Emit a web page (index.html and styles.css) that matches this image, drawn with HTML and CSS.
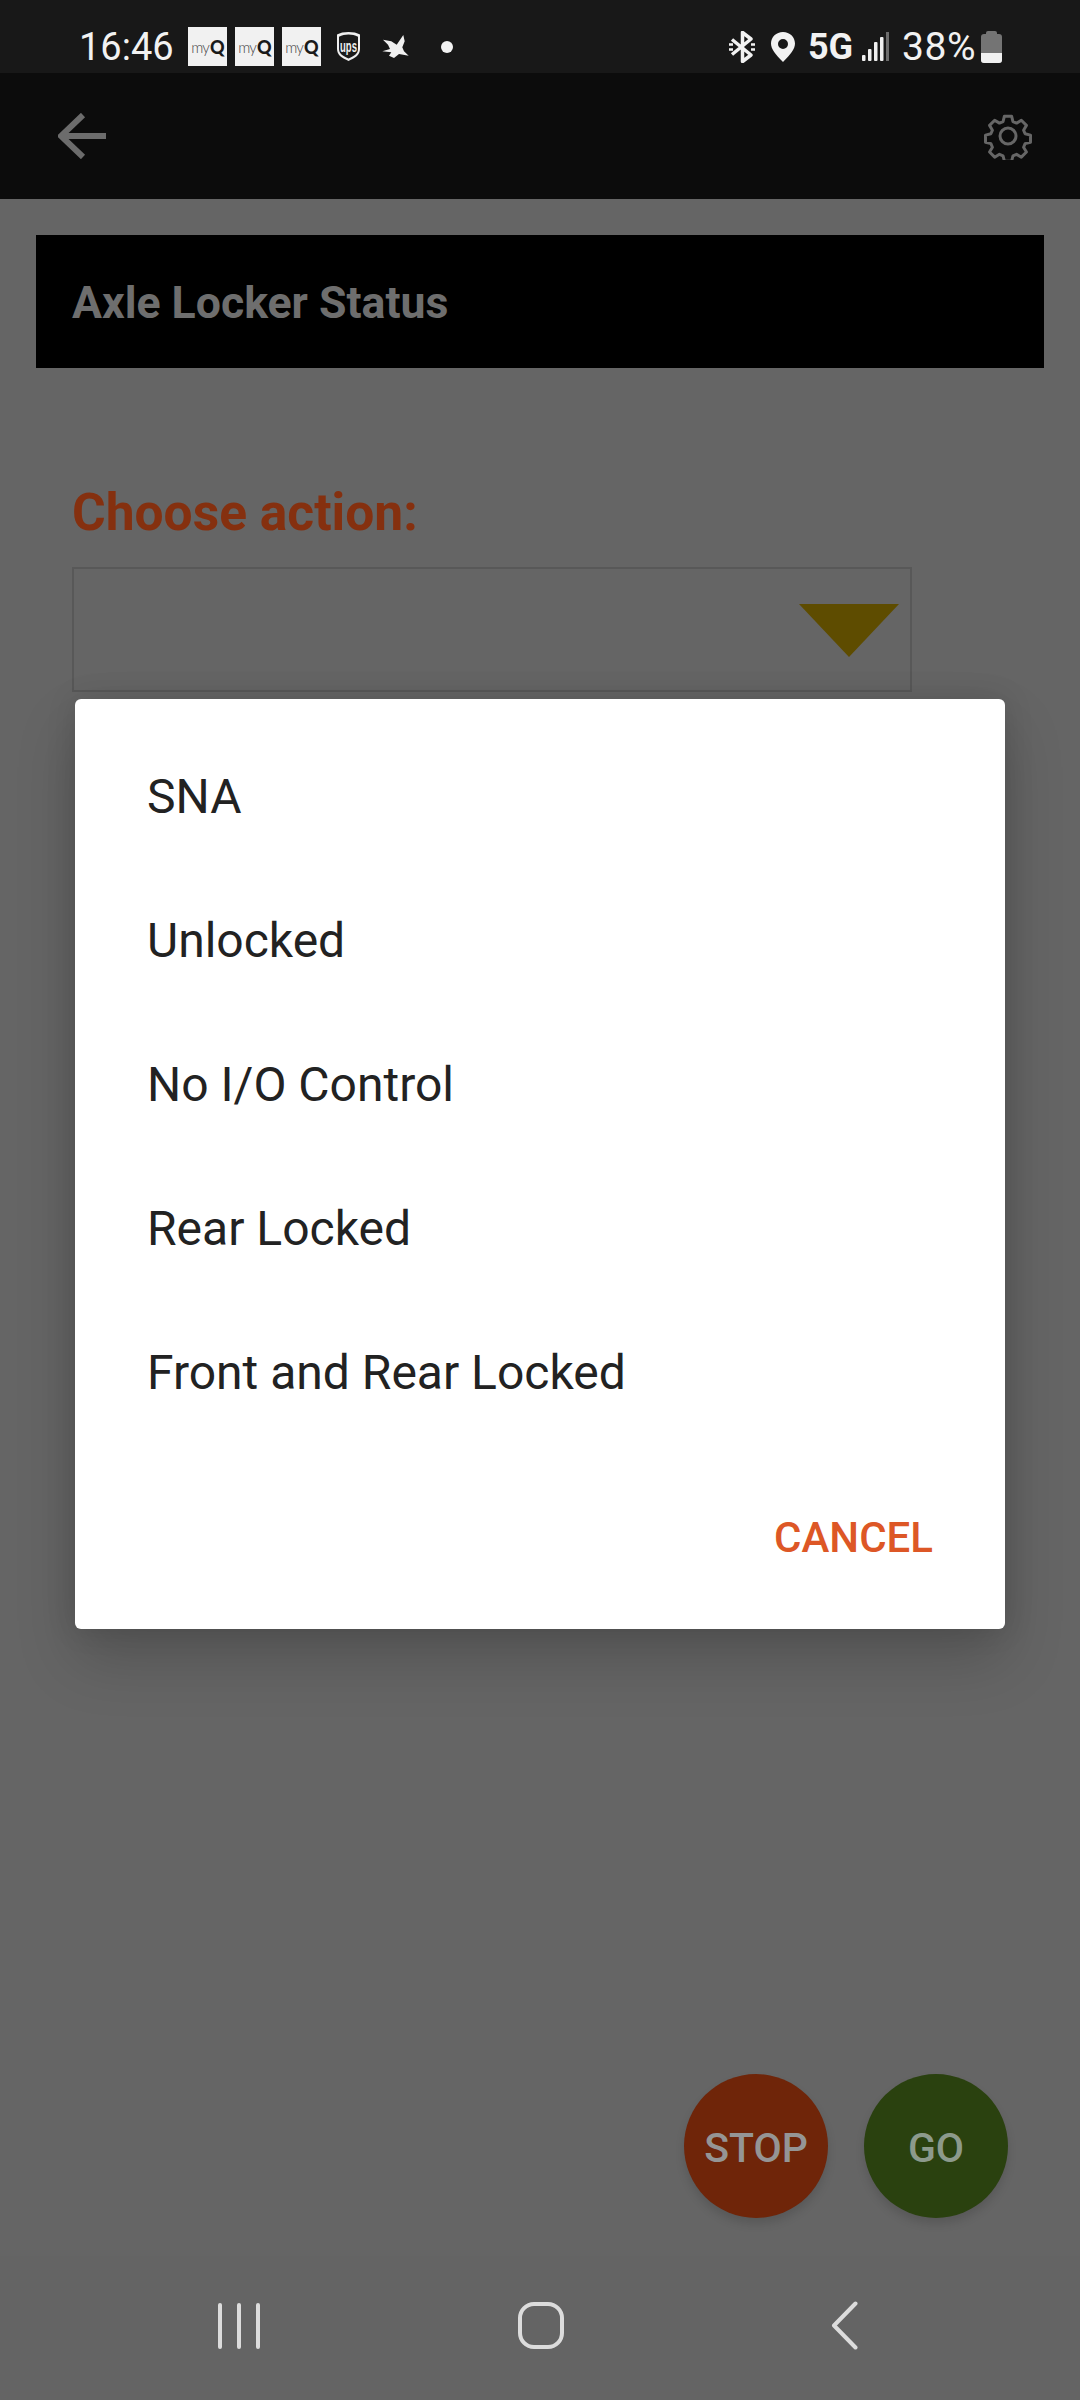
FILE: index.html
```html
<!DOCTYPE html>
<html lang="en">

<head>
    <meta charset="UTF-8">
    <meta name="viewport" content="width=device-width, initial-scale=1.0">
    <title>Axle Locker Status</title>
    <link rel="stylesheet" href="styles.css">
</head>

<body>
    <div class="status-bar">
        <div class="status-left">
            <span class="clock">16:46</span>
            <div class="notif-icons">
                <span class="myq">my<b>Q</b></span>
                <span class="myq">my<b>Q</b></span>
                <span class="myq">my<b>Q</b></span>
                <svg class="ups" viewBox="0 0 25 31">
                    <path d="M12.5 1C8 1 4 1.800 1 3.500V18c0 6 5 9 11.500 12C19 27 24 24 24 18V3.500C21 1.800 17 1 12.500 1Z" fill="#efefef"/>
                    <path d="M12.500 3.500C9 3.500 6 4.200 3 5.800V18c0 4.500 3.500 6.800 9.500 9.600 6-2.800 9.500-5.100 9.500-9.600V5.800C19 4.200 16 3.500 12.500 3.500Z" fill="#1a1a1a"/>
                    <text class="ups-text" transform="translate(12.500 20.500) scale(.95 1.600)" text-anchor="middle">ups</text>
                </svg>
                <svg class="bird" viewBox="0 0 27 25">
                    <path d="M1 5.700L9.300 7.300 14.700 10.700 21.300 1 22.700 7.300 20.300 13.300 22 17.300 26.700 21.700 17 20 12 24 7 21.700 9.300 18.300 .3 17.300 8 15 6 10.700Z" fill="#f0f0f0"/>
                </svg>
                <span class="notif-dot"></span>
            </div>
        </div>
        <div class="status-right">
            <svg class="bt" viewBox="0 0 26 32">
                <path d="M3 8.500l19 15.500-8.500 6.500V1.500L22 8 3 23.500" fill="none" stroke="#f2f2f2" stroke-width="3.500" stroke-linejoin="round"/>
                <path d="M0 13.500h4M22 13.500h4M0 18.500h4M22 18.500h4" stroke="#f2f2f2" stroke-width="2.500"/>
            </svg>
            <svg class="pin" viewBox="0 0 24 30">
                <path fill-rule="evenodd" d="M12 0c6.800 0 12 5 12 11.500 0 5.500-4.500 11-12 18.500C4.500 22.500 0 17 0 11.500 0 5 5.200 0 12 0Zm0 7a5 5 0 1 0 0 10 5 5 0 0 0 0-10Z" fill="#f2f2f2"/>
            </svg>
            <span class="net">5G</span>
            <svg class="signal" viewBox="0 0 27 29">
                <rect x="0" y="23" width="3.500" height="6" rx="1" fill="#f0f0f0"/>
                <rect x="6" y="17" width="3.500" height="12" rx="1" fill="#f0f0f0"/>
                <rect x="12" y="10" width="3.500" height="19" rx="1" fill="#f0f0f0"/>
                <rect x="18" y="5" width="3.500" height="24" rx="1" fill="#f0f0f0"/>
                <rect x="24" y="0" width="3" height="29" fill="#6c6c6c"/>
            </svg>
            <span class="batt-text">38%</span>
            <span class="battery"><span class="battery-level"></span></span>
        </div>
    </div>

    <div class="app-screen">
        <div class="app-bar">
            <svg class="back-icon" viewBox="0 0 48 46">
                <path d="M48 23H4M25 2L3 23l22 21" fill="none" stroke="#6c6c6c" stroke-width="6"/>
            </svg>
            <svg class="gear-icon" viewBox="0 0 48 48">
                <circle cx="24" cy="24" r="8" fill="none" stroke="#666" stroke-width="3"/>
                <path d="M20 2h8l1.500 6 4 1.700 5.300-3.200 5.700 5.700-3.200 5.300 1.700 4 6 1.500v8l-6 1.500-1.700 4 3.200 5.300-5.700 5.700-5.300-3.200-4 1.700-1.500 6h-8l-1.500-6-4-1.700-5.300 3.200-5.700-5.700 3.200-5.300-1.700-4-6-1.500v-8l6-1.500 1.700-4-3.200-5.300 5.700-5.700 5.300 3.200 4-1.700Z" fill="none" stroke="#666" stroke-width="3.300" stroke-linejoin="round" transform="translate(2.400 2.400) scale(.9)"/>
            </svg>
        </div>

        <div class="content">
            <div class="title-box">Axle Locker Status</div>
            <div class="action-label">Choose action:</div>
            <div class="select-box"><span class="select-arrow"></span></div>
        </div>

        <div class="fab-row">
            <div class="fab fab-stop">STOP</div>
            <div class="fab fab-go">GO</div>
        </div>

        <!-- picker, over the dimmed page -->
        <div class="scrim">
            <div class="dialog">
                <div class="dialog-item">SNA</div>
                <div class="dialog-item">Unlocked</div>
                <div class="dialog-item">No I/O Control</div>
                <div class="dialog-item">Rear Locked</div>
                <div class="dialog-item">Front and Rear Locked</div>
                <div class="dialog-actions"><span class="cancel">CANCEL</span></div>
            </div>
        </div>
    </div>

    <div class="nav-bar">
        <div class="nav-recents"><span></span><span></span><span></span></div>
        <div class="nav-home"></div>
        <svg class="nav-back" viewBox="0 0 27 49">
            <path d="M24.500 2.500L3 24.500l21.500 22" fill="none" stroke="#dcdcdc" stroke-width="4" stroke-linecap="round" stroke-linejoin="round"/>
        </svg>
    </div>
</body>

</html>
```

FILE: styles.css
```css
* {
    box-sizing: border-box;
}

body {
    width: 1080px;
    height: 2400px;
    margin: 0;
    overflow: hidden;
    display: flex;
    flex-direction: column;
    font-family: Roboto, "Noto Sans", sans-serif;
    background: #646464;
}

/* status bar */
.status-bar {
    height: 73px;
    flex: none;
    background: #181818;
    display: flex;
    justify-content: space-between;
    color: #f2f2f2;
    padding: 27px 78px 0 79px;
}

.status-left, .status-right, .notif-icons {
    display: flex;
    align-items: center;
    height: 39px;
}

.clock {
    font-size: 38px;
    width: 109px;
}

.notif-icons {
    gap: 8px;
}

.myq {
    width: 39px;
    height: 39px;
    background: #f1f1f1;
    color: #444;
    font-size: 15px;
    font-weight: 300;
    font-family: Lato, sans-serif;
    display: flex;
    align-items: center;
    justify-content: center;
    letter-spacing: -.8px;
}

.myq b {
    font-size: 18px;
    font-weight: 900;
    color: #1a1a1a;
    margin-left: 1px;
}

.ups {
    width: 25px;
    height: 31px;
    margin-left: 7px;
}

.ups-text {
    font-family: "Liberation Sans", sans-serif;
    font-size: 10px;
    font-weight: 700;
    fill: #efefef;
}

.bird {
    width: 27px;
    height: 25px;
    margin-left: 13px;
}

.notif-dot {
    width: 12px;
    height: 12px;
    border-radius: 50%;
    background: #f2f2f2;
    margin-left: 24px;
}

.bt {
    width: 26px;
    height: 32px;
}

.pin {
    width: 24px;
    height: 30px;
    margin-left: 16px;
}

.net {
    font-size: 36px;
    font-weight: 700;
    margin-left: 13px;
}

.signal {
    width: 27px;
    height: 29px;
    margin-left: 9px;
}

.batt-text {
    font-size: 39px;
    letter-spacing: .5px;
    margin-left: 13px;
}

.battery {
    width: 21px;
    height: 29px;
    margin: 3px 0 0 5px;
    position: relative;
    background: #747474;
    border-radius: 3px;
    display: flex;
    align-items: flex-end;
}

.battery::before {
    content: "";
    position: absolute;
    top: -3px;
    left: 5px;
    width: 11px;
    height: 4px;
    border-radius: 2px 2px 0 0;
    background: #747474;
}

.battery-level {
    width: 100%;
    height: 10px;
    background: #f0f0f0;
    border-radius: 0 0 3px 3px;
}

/* app underneath the dialog, colours already dimmed */
.app-screen {
    flex: 1;
    position: relative;
    background: #656565;
}

.app-bar {
    height: 126px;
    background: #0c0c0c;
    display: flex;
    justify-content: space-between;
    align-items: center;
    padding: 0 48px 0 58px;
    margin-bottom: 36px;
}

.back-icon {
    width: 48px;
    height: 46px;
}

.gear-icon {
    width: 48px;
    height: 48px;
}

.content {
    padding: 0 36px;
}

.title-box {
    height: 133px;
    background: #000;
    color: #6e6e6e;
    font-size: 44.600px;
    font-weight: 700;
    display: flex;
    align-items: center;
    padding: 2px 0 0 36px;
}

.action-label {
    color: #85300f;
    font-size: 51.500px;
    font-weight: 700;
    line-height: 56px;
    margin: 117px 0 0 36px;
}

.select-box {
    width: 840px;
    height: 125px;
    margin: 26px 0 0 36px;
    border: 2px solid #585858;
    position: relative;
}

.select-arrow {
    position: absolute;
    top: 35px;
    right: 11px;
    width: 0;
    height: 0;
    border-style: solid;
    border-width: 53px 50px 0;
    border-color: #5e4c00 transparent transparent;
}

.fab-row {
    position: absolute;
    right: 72px;
    top: 2001px;
    display: flex;
    gap: 36px;
}

.fab {
    width: 144px;
    height: 144px;
    border-radius: 50%;
    font-size: 41px;
    font-weight: 500;
    display: flex;
    align-items: center;
    justify-content: center;
    padding-top: 3px;
    box-shadow: 0 6px 10px rgba(0, 0, 0, .13);
}

.fab-stop {
    background: #6f2509;
    color: #959595;
}

.fab-go {
    background: #2a410f;
    color: #8c9a8c;
}

/* dialog */
.scrim {
    position: absolute;
    inset: 0;
    display: flex;
    align-items: flex-start;
    justify-content: center;
    padding-top: 626px;
}

.dialog {
    width: 930px;
    height: 930px;
    background: #fff;
    border-radius: 6px;
    padding-top: 25px;
    box-shadow: 0 30px 60px rgba(0, 0, 0, .18), 0 0 30px rgba(0, 0, 0, .12);
}

.dialog-item {
    height: 144px;
    display: flex;
    align-items: center;
    padding-left: 72px;
    font-size: 48px;
    color: #222;
}

.dialog-actions {
    display: flex;
    justify-content: flex-end;
    padding: 69px 72px 0 0;
}

.cancel {
    color: #dd5726;
    font-size: 42px;
    font-weight: 500;
}

/* nav */
.nav-bar {
    height: 144px;
    flex: none;
    background: #646464;
    display: flex;
    align-items: center;
    padding: 0 0 5px 218px;
}

.nav-recents {
    display: flex;
    gap: 15px;
    width: 300px;
}

.nav-recents span {
    width: 4px;
    height: 46px;
    border-radius: 2px;
    background: #dcdcdc;
}

.nav-home {
    width: 46px;
    height: 47px;
    border: 4px solid #dcdcdc;
    border-radius: 16px;
}

.nav-back {
    width: 27px;
    height: 49px;
    margin-left: 267px;
}
```
